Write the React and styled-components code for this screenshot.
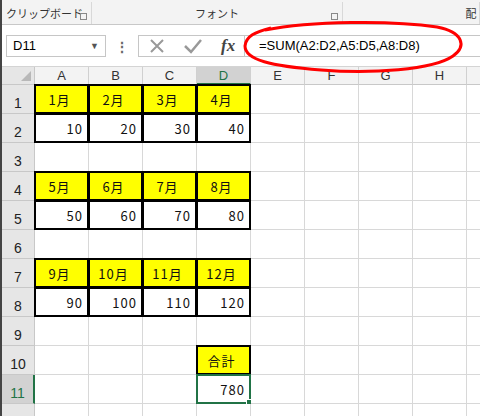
import React from 'react';
import styled, { createGlobalStyle } from 'styled-components';

const G = createGlobalStyle`
  body { margin:0; background:#fff; font-family:"Noto Sans CJK JP","Liberation Sans",sans-serif; }
`;
const Wrap = styled.div`width:480px;height:416px;overflow:hidden;display:flex;flex-direction:column;border-left:2px solid #444;box-sizing:border-box;`;
const Ribbon = styled.div`height:22px;flex:none;background:#f3f3f3;display:flex;border-bottom:1px solid #c8c8c8;font-size:11px;color:#333;padding-top:2px;`;
const RGroup = styled.div`width:${p=>p.w}px;flex:none;display:flex;align-items:center;justify-content:${p=>p.j||'center'};position:relative;border-right:1px solid #d8d8d8;box-sizing:border-box;padding-left:${p=>p.pl||0}px;white-space:nowrap;overflow:hidden;`;
const Launcher = styled.span`position:absolute;right:4px;bottom:4px;width:5px;height:5px;border:1px solid #888;`;
const FBar = styled.div`height:41px;flex:none;background:#fff;display:flex;align-items:center;border-bottom:1px solid #d4d4d4;`;
const NameBox = styled.div`margin-left:4px;width:100px;height:22px;border:1px solid #c6c6c6;box-sizing:border-box;display:flex;align-items:center;justify-content:space-between;padding:0 6px;font:13px "Liberation Sans",sans-serif;`;
const Dots = styled.div`width:32px;text-align:center;color:#666;font-size:14px;font-weight:bold;`;
const IconBox = styled.div`width:106px;height:22px;border:1px solid #c6c6c6;border-right:none;box-sizing:border-box;display:flex;align-items:center;justify-content:space-around;color:#999;`;
const Fx = styled.span`font:italic bold 17px "Liberation Serif",serif;color:#444;`;
const Formula = styled.div`flex:1;height:22px;border:1px solid #c6c6c6;border-right:none;box-sizing:border-box;display:flex;align-items:center;padding-left:14px;font:13px "Liberation Sans",sans-serif;position:relative;`;
const Oval = styled.svg`position:absolute;left:-4px;top:-18px;`;
const Grid = styled.div`display:grid;grid-template-columns:33px repeat(8,54px) 40px;grid-template-rows:18px repeat(11,29px) 20px;background:#fff;`;
const Corner = styled.div`background:#e6e6e6;border-right:1px solid #c8c8c8;border-bottom:1px solid #c8c8c8;position:relative;&:after{content:'';position:absolute;right:3px;bottom:3px;border-left:10px solid transparent;border-bottom:10px solid #b8b8b8;}`;
const ColH = styled.div`background:${p=>p.sel?'#d2d2d2':'#f3f3f3'};border-right:1px solid #d0d0d0;border-bottom:${p=>p.sel?'2px solid #217346':'1px solid #c8c8c8'};color:${p=>p.sel?'#217346':'#333'};display:flex;align-items:center;justify-content:center;font:13px "Liberation Sans",sans-serif;box-sizing:border-box;`;
const RowH = styled.div`background:${p=>p.sel?'#d2d2d2':'#e6e6e6'};border-bottom:1px solid #c8c8c8;border-right:${p=>p.sel?'2px solid #217346':'1px solid #c8c8c8'};color:${p=>p.sel?'#217346':'#222'};display:flex;align-items:flex-end;justify-content:center;padding-bottom:2px;font:14px "Liberation Sans",sans-serif;box-sizing:border-box;`;
const Cell = styled.div`box-sizing:border-box;border-right:1px solid #d8d8d8;border-bottom:1px solid #d8d8d8;background:${p=>p.y?'#ffff00':'#fff'};display:flex;align-items:center;justify-content:${p=>p.y?'center':'flex-end'};padding-right:4px;font-size:13px;color:#111;letter-spacing:1px;position:relative;
  ${p=>p.b?`border:2px solid #000;margin:-1px 0 0 -1px;`:''}
  ${p=>p.sel?`border:2px solid #217346;margin:-1px 0 0 -1px;`:''}`;
const Handle = styled.span`position:absolute;right:-4px;bottom:-4px;width:5px;height:5px;background:#217346;border:1px solid #fff;`;

const data = [
  [['1月','2月','3月','4月'],['10','20','30','40']],
  [['5月','6月','7月','8月'],['50','60','70','80']],
  [['9月','10月','11月','12月'],['90','100','110','120']],
];
export default function App(){
  const cols=['A','B','C','D','E','F','G','H',''];
  const rows=[];
  for(let r=1;r<=12;r++){
    const cells=[];
    for(let c=0;c<10;c++){
      let y=false,b=false,t='',sel=false;
      const blk=[1,4,7].indexOf(r), blk2=[2,5,8].indexOf(r);
      if(c>=1&&c<=4){
        if(blk>=0){y=true;b=true;t=data[blk][0][c-1];}
        if(blk2>=0){b=true;t=data[blk2][1][c-1];}
        if(c===4&&r===10){y=true;b=true;t='合計';}
        if(c===4&&r===11){sel=true;t='780';}
      }
      cells.push(c===0?<RowH key={c} sel={r===11}>{r<=11?r:''}</RowH>:<Cell key={c} y={y} b={b} sel={sel}>{t}{sel&&<Handle/>}</Cell>);
    }
    rows.push(cells);
  }
  return <><G/><Wrap>
    <Ribbon>
      <RGroup w={90} j="flex-start" pl={4}>クリップボード<Launcher/></RGroup>
      <RGroup w={251}>フォント<Launcher/></RGroup>
      <RGroup w={137} j="flex-end">配&nbsp;</RGroup>
    </Ribbon>
    <FBar>
      <NameBox><span>D11</span><span style={{fontSize:9,color:'#555'}}>▼</span></NameBox>
      <Dots>⋮</Dots>
      <IconBox>
        <svg width="18" height="18" viewBox="0 0 18 18"><path d="M3 3L15 15M15 3L3 15" stroke="#999" strokeWidth="2"/></svg>
        <svg width="20" height="18" viewBox="0 0 20 18"><path d="M2 9L8 15L18 3" stroke="#999" strokeWidth="2.5" fill="none"/></svg>
        <Fx>fx</Fx>
      </IconBox>
      <Formula>=SUM(A2:D2,A5:D5,A8:D8)
        <Oval width="226" height="58" viewBox="0 0 226 58"><path d="M24 12C70 3 150 2 196 9C222 14 226 28 212 38C192 52 130 56 80 52C30 48 4 42 4 28C5 18 14 14 30 10" stroke="#f00" strokeWidth="3" fill="none"/></Oval>
      </Formula>
    </FBar>
    <Grid>
      <Corner/>
      {cols.map((c,i)=><ColH key={i} sel={c==='D'}>{c}</ColH>)}
      {rows}
    </Grid>
  </Wrap></>;
}
